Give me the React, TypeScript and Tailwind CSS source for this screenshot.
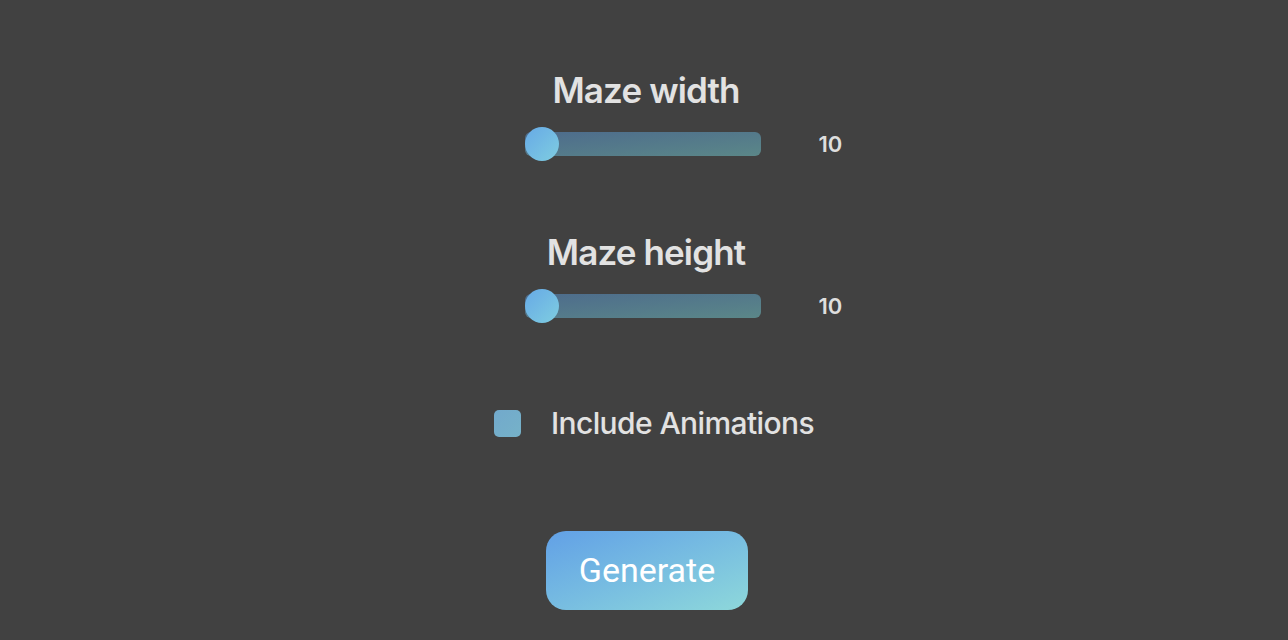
import { useState } from 'react'

type SliderProps = {
  label: string
  value: number
  onChange: (v: number) => void
}

function MazeSlider({ label, value, onChange }: SliderProps) {
  const pct = ((value - 10) / (50 - 10)) * 100
  return (
    <div className="flex flex-col items-center">
      <h2 className="ml-[4px] text-[35px] leading-[40px] font-semibold text-[#e2e2e2] tracking-[-0.025em]">{label}</h2>
      <div className="grid grid-cols-[1fr_auto_1fr] items-center w-[420px] mt-[17px] -ml-[3px]">
        <div />
        <div className="relative w-[236px] h-[34px] flex items-center">
          <div className="w-full h-[24px] rounded-[6px] bg-gradient-to-br from-[#4d6b8c] to-[#5b8788]" />
          {/* thumb */}
          <div
            className="absolute top-0 w-[34px] h-[34px] rounded-full bg-gradient-to-br from-[#67a9e6] to-[#7fcde0]"
            style={{ left: `calc(${pct}% - ${(pct / 100) * 34}px)` }}
          />
          <input
            type="range"
            min={10}
            max={50}
            value={value}
            onChange={(e) => onChange(Number(e.target.value))}
            className="absolute inset-0 w-full opacity-0 cursor-pointer"
          />
        </div>
        <span className="pl-[58px] text-[22px] font-semibold text-[#dedede]">{value}</span>
      </div>
    </div>
  )
}

export default function App() {
  const [width, setWidth] = useState(10)
  const [height, setHeight] = useState(10)
  const [animate, setAnimate] = useState(false)

  return (
    <div
      className="min-h-screen w-full bg-[#414141] flex flex-col items-center pt-[70px]"
      style={{ fontFamily: 'Inter, "Noto Sans", sans-serif' }}
    >
      <MazeSlider label="Maze width" value={width} onChange={setWidth} />
      <div className="mt-[71px]">
        <MazeSlider label="Maze height" value={height} onChange={setHeight} />
      </div>

      {/* Animations toggle */}
      <label className="mt-[82px] ml-[20px] flex items-center gap-[30px] cursor-pointer">
        <input
          type="checkbox"
          checked={animate}
          onChange={(e) => setAnimate(e.target.checked)}
          className="appearance-none w-[27px] h-[27px] rounded-[5px] bg-gradient-to-br from-[#72a9cc] to-[#76b2c8]"
        />
        <span className="text-[30px] leading-[36px] font-medium text-[#e2e2e2] tracking-[-0.02em]">Include Animations</span>
      </label>

      <button
        className="mt-[90px] ml-[6px] w-[202px] h-[79px] rounded-[20px] bg-gradient-to-br from-[#62a0e6] to-[#8ed8da] text-white text-[34px]"
        style={{ fontFamily: 'Roboto, sans-serif' }}
      >
        Generate
      </button>
    </div>
  )
}
